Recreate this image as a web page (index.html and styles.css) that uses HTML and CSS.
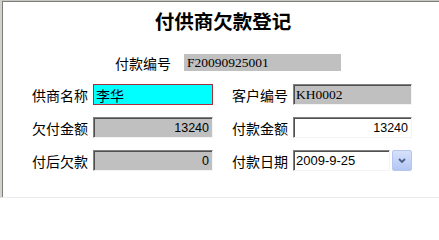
FILE: index.html
```html
<!DOCTYPE html>
<html lang="zh-CN">
<head>
<meta charset="utf-8">
<title>付供商欠款登记</title>
<link rel="stylesheet" href="styles.css">
</head>
<body>
<div class="frame">
  <div class="inner">
    <h1 class="title">付供商欠款登记</h1>
    <div class="row-top">
      <span class="label">付款编号</span>
      <span class="field flat serif">F20090925001</span>
    </div>
    <div class="grid">
      <span class="label">供商名称</span>
      <span class="field cyan">李华</span>
      <span class="label">客户编号</span>
      <span class="field gray sunken serif">KH0002</span>

      <span class="label">欠付金额</span>
      <span class="field gray sunken num">13240</span>
      <span class="label">付款金额</span>
      <span class="field white sunken num">13240</span>

      <span class="label">付后欠款</span>
      <span class="field gray sunken num">0</span>
      <span class="label">付款日期</span>
      <span class="combo">
        <span class="field white sunken date">2009-9-25</span>
        <span class="drop"><svg width="12" height="10" viewBox="0 0 12 10"><path d="M3 3 L6 6 L9 3" fill="none" stroke="#4a5f8c" stroke-width="1.8"/></svg></span>
      </span>
    </div>
  </div>
</div>
</body>
</html>
```

FILE: styles.css
```css
html, body {
  margin: 0;
  padding: 0;
  background: #ffffff;
}

.frame {
  width: 439px;
  height: 198px;
  box-sizing: border-box;
  border-top: 1px solid #c9c9c4;
  border-left: 2px solid #d4d2cc;
  border-bottom: 1px solid #ebebeb;
  background: #ffffff;
}

.inner {
  height: 100%;
  box-sizing: border-box;
  border-top: 1px solid #7c7c7c;
  border-left: 1px solid #7c7c7c;
  font-family: "Noto Sans CJK SC", "Noto Sans", sans-serif;
  color: #000;
}

.title {
  margin: 7px 0 0;
  padding-left: 4px;
  font-size: 19.5px;
  line-height: 24px;
  font-weight: bold;
  text-align: center;
}

.label {
  font-size: 14px;
  line-height: 16px;
  white-space: nowrap;
}

.row-top {
  display: flex;
  align-items: center;
  height: 17px;
  margin-top: 21px;
  padding-left: 112px;
}

.row-top .label {
  width: 56px;
}

.row-top .field {
  margin-left: 13px;
  width: 157px;
  height: 17px;
}

.grid {
  display: grid;
  grid-template-columns: 56px 120px 70px 119px;
  grid-auto-rows: 21px;
  column-gap: 5px;
  row-gap: 12px;
  margin-top: 13px;
  padding-left: 29px;
  align-items: center;
}

.grid .label {
  text-align: right;
}

.field {
  display: flex;
  align-items: center;
  box-sizing: border-box;
  height: 21px;
  padding: 0 2px;
  white-space: nowrap;
  overflow: hidden;
}

.flat {
  background: #c0c0c0;
  padding-left: 3px;
}

.serif {
  font-family: "Liberation Serif", serif;
  font-size: 13.5px;
}

.gray {
  background: #c0c0c0;
}

.white {
  background: #ffffff;
}

.sunken {
  border-top: 1px solid #808080;
  border-left: 1px solid #808080;
  border-right: 1px solid #f4f4f4;
  border-bottom: 1px solid #f4f4f4;
  box-shadow: inset 1px 1px 0 #505050;
}

.cyan {
  background: #00ffff;
  border: 1px solid #a8303a;
  font-size: 14px;
  color: #000018;
}

.num {
  justify-content: flex-end;
  font-family: "Liberation Sans", sans-serif;
  font-size: 12.5px;
  padding-right: 3px;
}

.combo {
  display: flex;
  gap: 2px;
  height: 21px;
}

.date {
  width: 97px;
  font-family: "Liberation Sans", sans-serif;
  font-size: 13px;
  padding-left: 2px;
}

.drop {
  width: 20px;
  height: 21px;
  box-sizing: border-box;
  border: 1px solid #b7c6ec;
  border-radius: 2px;
  background: linear-gradient(#d6e1fc, #b3c6f4);
  display: flex;
  align-items: center;
  justify-content: center;
}
```
